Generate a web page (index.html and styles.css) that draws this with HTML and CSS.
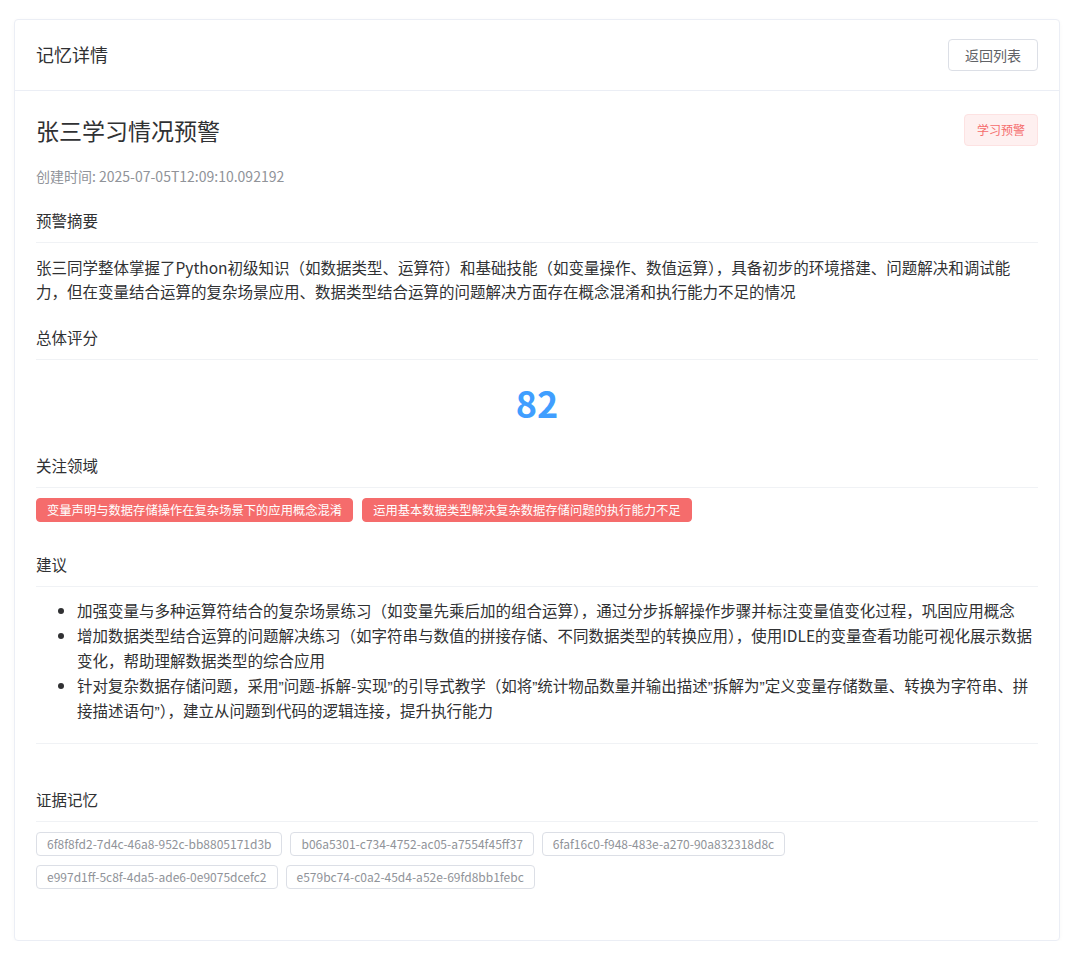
FILE: index.html
```html
<!DOCTYPE html>
<html lang="zh-CN">
<head>
<meta charset="utf-8">
<title>记忆详情</title>
<link rel="stylesheet" href="styles.css">
</head>
<body>
<div class="page">
  <div class="card">
    <div class="card-header">
      <span class="header-title">记忆详情</span>
      <button class="btn">返回列表</button>
    </div>
    <div class="card-body">
      <div class="title-row">
        <h2 class="title">张三学习情况预警</h2>
        <span class="tag-type">学习预警</span>
      </div>
      <div class="meta">创建时间: 2025-07-05T12:09:10.092192</div>

      <div class="section">
        <div class="section-title">预警摘要</div>
        <p class="summary">张三同学整体掌握了Python初级知识（如数据类型、运算符）和基础技能（如变量操作、数值运算），具备初步的环境搭建、问题解决和调试能力，但在变量结合运算的复杂场景应用、数据类型结合运算的问题解决方面存在概念混淆和执行能力不足的情况</p>
      </div>

      <div class="section">
        <div class="section-title">总体评分</div>
        <div class="score">82</div>
      </div>

      <div class="section section-focus">
        <div class="section-title">关注领域</div>
        <div class="focus-tags">
          <span class="tag-danger">变量声明与数据存储操作在复杂场景下的应用概念混淆</span>
          <span class="tag-danger">运用基本数据类型解决复杂数据存储问题的执行能力不足</span>
        </div>
      </div>

      <div class="section section-advice">
        <div class="section-title">建议</div>
        <ul class="advice">
          <li>加强变量与多种运算符结合的复杂场景练习（如变量先乘后加的组合运算），通过分步拆解操作步骤并标注变量值变化过程，巩固应用概念</li>
          <li>增加数据类型结合运算的问题解决练习（如字符串与数值的拼接存储、不同数据类型的转换应用），使用IDLE的变量查看功能可视化展示数据变化，帮助理解数据类型的综合应用</li>
          <li>针对复杂数据存储问题，采用<span class="q">”</span>问题-拆解-实现<span class="q">”</span>的引导式教学（如将<span class="q">”</span>统计物品数量并输出描述<span class="q">”</span>拆解为<span class="q">”</span>定义变量存储数量、转换为字符串、拼接描述语句<span class="q">”</span>），建立从问题到代码的逻辑连接，提升执行能力</li>
        </ul>
        <div class="divider"></div>
      </div>

      <div class="section section-evidence">
        <div class="section-title">证据记忆</div>
        <div class="evidence-tags">
          <span class="tag-info">6f8f8fd2-7d4c-46a8-952c-bb8805171d3b</span>
          <span class="tag-info">b06a5301-c734-4752-ac05-a7554f45ff37</span>
          <span class="tag-info">6faf16c0-f948-483e-a270-90a832318d8c</span>
          <span class="tag-info">e997d1ff-5c8f-4da5-ade6-0e9075dcefc2</span>
          <span class="tag-info">e579bc74-c0a2-45d4-a52e-69fd8bb1febc</span>
        </div>
      </div>
    </div>
  </div>
</div>
</body>
</html>
```

FILE: styles.css
```css
* {
  box-sizing: border-box;
}

html, body {
  margin: 0;
  padding: 0;
  background: #ffffff;
}

body {
  font-family: "Noto Sans CJK SC", "Noto Sans", sans-serif;
  color: #303133;
}

.page {
  padding: 19px 20px 0 14px;
}

.card {
  width: 1046px;
  border: 1px solid #ebeef5;
  border-radius: 4px;
  background: #fff;
  box-shadow: 0 1px 4px rgba(0, 0, 0, 0.03);
}

.card-header {
  display: flex;
  justify-content: space-between;
  align-items: center;
  padding: 19px 21px;
  border-bottom: 1px solid #ebeef5;
}

.header-title {
  font-size: 18px;
  line-height: 32px;
  color: #303133;
  position: relative;
  top: -1px;
}

.btn {
  height: 32px;
  padding: 0 16px;
  font-family: inherit;
  font-size: 14px;
  color: #606266;
  background: #fff;
  border: 1px solid #dcdfe6;
  border-radius: 4px;
  cursor: pointer;
}

.card-body {
  padding: 20px 21px 20px;
}

.title-row {
  display: flex;
  justify-content: space-between;
  align-items: center;
  height: 38px;
}

.title {
  margin: 0;
  font-size: 23px;
  font-weight: 400;
  line-height: 38px;
  color: #303133;
}

.tag-type {
  display: inline-block;
  height: 32px;
  line-height: 30px;
  padding: 0 12px;
  font-size: 12px;
  color: #f56c6c;
  background: #fef0f0;
  border: 1px solid #fde2e2;
  border-radius: 4px;
}

.meta {
  margin-top: 17px;
  font-size: 14px;
  line-height: 20px;
  color: #909399;
}

.section {
  margin-top: 22px;
}

.section-title {
  font-size: 15.5px;
  line-height: 24px;
  padding-bottom: 10px;
  border-bottom: 1px solid #f0f2f5;
  color: #303133;
}

.summary {
  margin: 12px 0 0;
  font-size: 15.5px;
  line-height: 24px;
  color: #303133;
}

.score {
  margin-top: 12px;
  text-align: center;
  font-size: 36px;
  font-weight: 700;
  line-height: 60px;
  color: #409eff;
}

.section-focus {
  margin-top: 21px;
}

.focus-tags {
  display: flex;
  flex-wrap: wrap;
  gap: 9px;
  margin-top: 10px;
}

.tag-danger {
  display: inline-block;
  height: 24px;
  line-height: 22px;
  padding: 0 10px;
  font-size: 12.3px;
  color: #fff;
  background: #f56c6c;
  border: 1px solid #f56c6c;
  border-radius: 4px;
  white-space: nowrap;
}

.section-advice {
  margin-top: 30px;
}

.advice {
  margin: 11px 0 0;
  padding-left: 41px;
  font-size: 15.5px;
  line-height: 25px;
  color: #303133;
}

.q {
  font-family: "Liberation Sans", sans-serif;
  line-height: 1;
}

.divider {
  margin-top: 20px;
  border-top: 1px solid #f0f2f5;
}

.section-evidence {
  margin-top: 43px;
}

.evidence-tags {
  display: flex;
  flex-wrap: wrap;
  row-gap: 9px;
  margin-top: 10px;
  margin-bottom: 31px;
}

.tag-info {
  display: inline-block;
  height: 24px;
  line-height: 22px;
  padding: 0 10px;
  margin-right: 8px;
  font-size: 12px;
  color: #909399;
  background: #fff;
  border: 1px solid #dcdfe6;
  border-radius: 4px;
  white-space: nowrap;
}
```
